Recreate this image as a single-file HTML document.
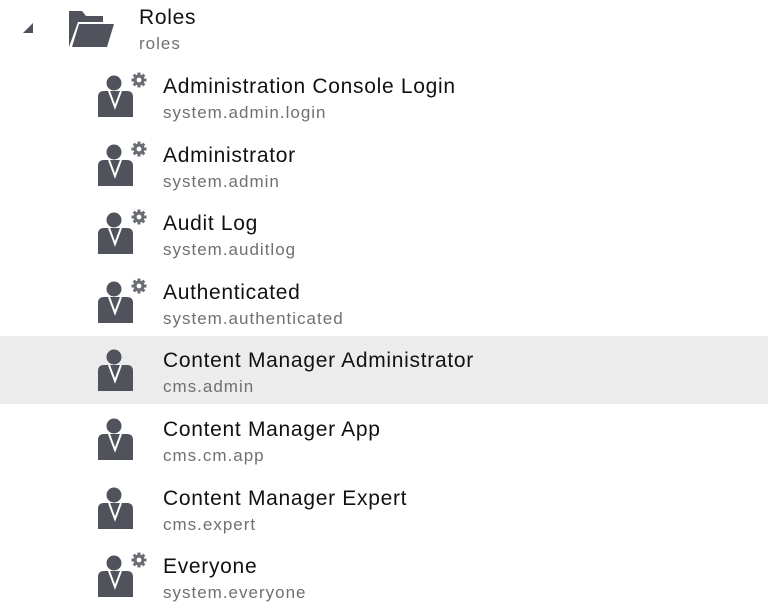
<!DOCTYPE html>
<html><head><style>
body{margin:0;width:768px;height:614px;background:#fff;font-family:"Liberation Sans",sans-serif;position:relative;overflow:hidden}
.row{position:absolute;left:0;width:768px;height:68px}
.hl{background:#ececec}
.t{position:absolute;left:163px;top:13px;font-size:21px;letter-spacing:0.7px;color:#111;white-space:nowrap}
.s{position:absolute;left:163px;top:41px;font-size:17px;letter-spacing:1px;color:#707070;white-space:nowrap}
svg{position:absolute}
</style></head><body>
<svg style="left:0;top:0" width="130" height="60"><path d="M23 33 L33 23 L33 33 Z" fill="#50535b"/>
<path d="M69 47 V11 H82 L86 16 H103 V22 H78 Z" fill="#50535b"/><path d="M72 47 L79 24 H114 L107 47 Z" fill="#50535b"/></svg>
<div class="t" style="left:139px;top:6px">Roles</div><div class="s" style="left:139px;top:34px">roles</div>
<div id="rows"></div>
<script>
var d=[["Administration Console Login","system.admin.login",1],["Administrator","system.admin",1],["Audit Log","system.auditlog",1],["Authenticated","system.authenticated",1],["Content Manager Administrator","cms.admin",0],["Content Manager App","cms.cm.app",0],["Content Manager Expert","cms.expert",0],["Everyone","system.everyone",1]];
var h="";d.forEach(function(r,i){var top=Math.round(62+68.6*i);
h+='<div class="row'+(i==4?' hl':'')+'" style="top:'+top+'px"><svg style="left:95px;top:0" width="60" height="60">'+
'<circle cx="19" cy="21" r="7.5" fill="#50535b"/><path d="M3 55 V35 Q3 29 9 29 H32 Q38 29 38 35 V55 Z" fill="#50535b"/>'+
'<path d="M14 29 L20 45 L26 29" fill="none" stroke="#fff" stroke-width="2"/>'+
(r[2]?'<g transform="translate(44,18)" fill="#6a6d74"><circle r="5.5"/><g stroke="#6a6d74" stroke-width="3"><line x1="0" y1="-7.5" x2="0" y2="7.5"/><line x1="-7.5" y1="0" x2="7.5" y2="0"/><line x1="-5.3" y1="-5.3" x2="5.3" y2="5.3"/><line x1="-5.3" y1="5.3" x2="5.3" y2="-5.3"/></g><circle r="2.4" fill="'+(i==4?'#ececec':'#fff')+'"/></g>':'')+
'</svg><div class="t">'+r[0]+'</div><div class="s">'+r[1]+'</div></div>';});
document.getElementById("rows").innerHTML=h;
</script>
</body></html>
